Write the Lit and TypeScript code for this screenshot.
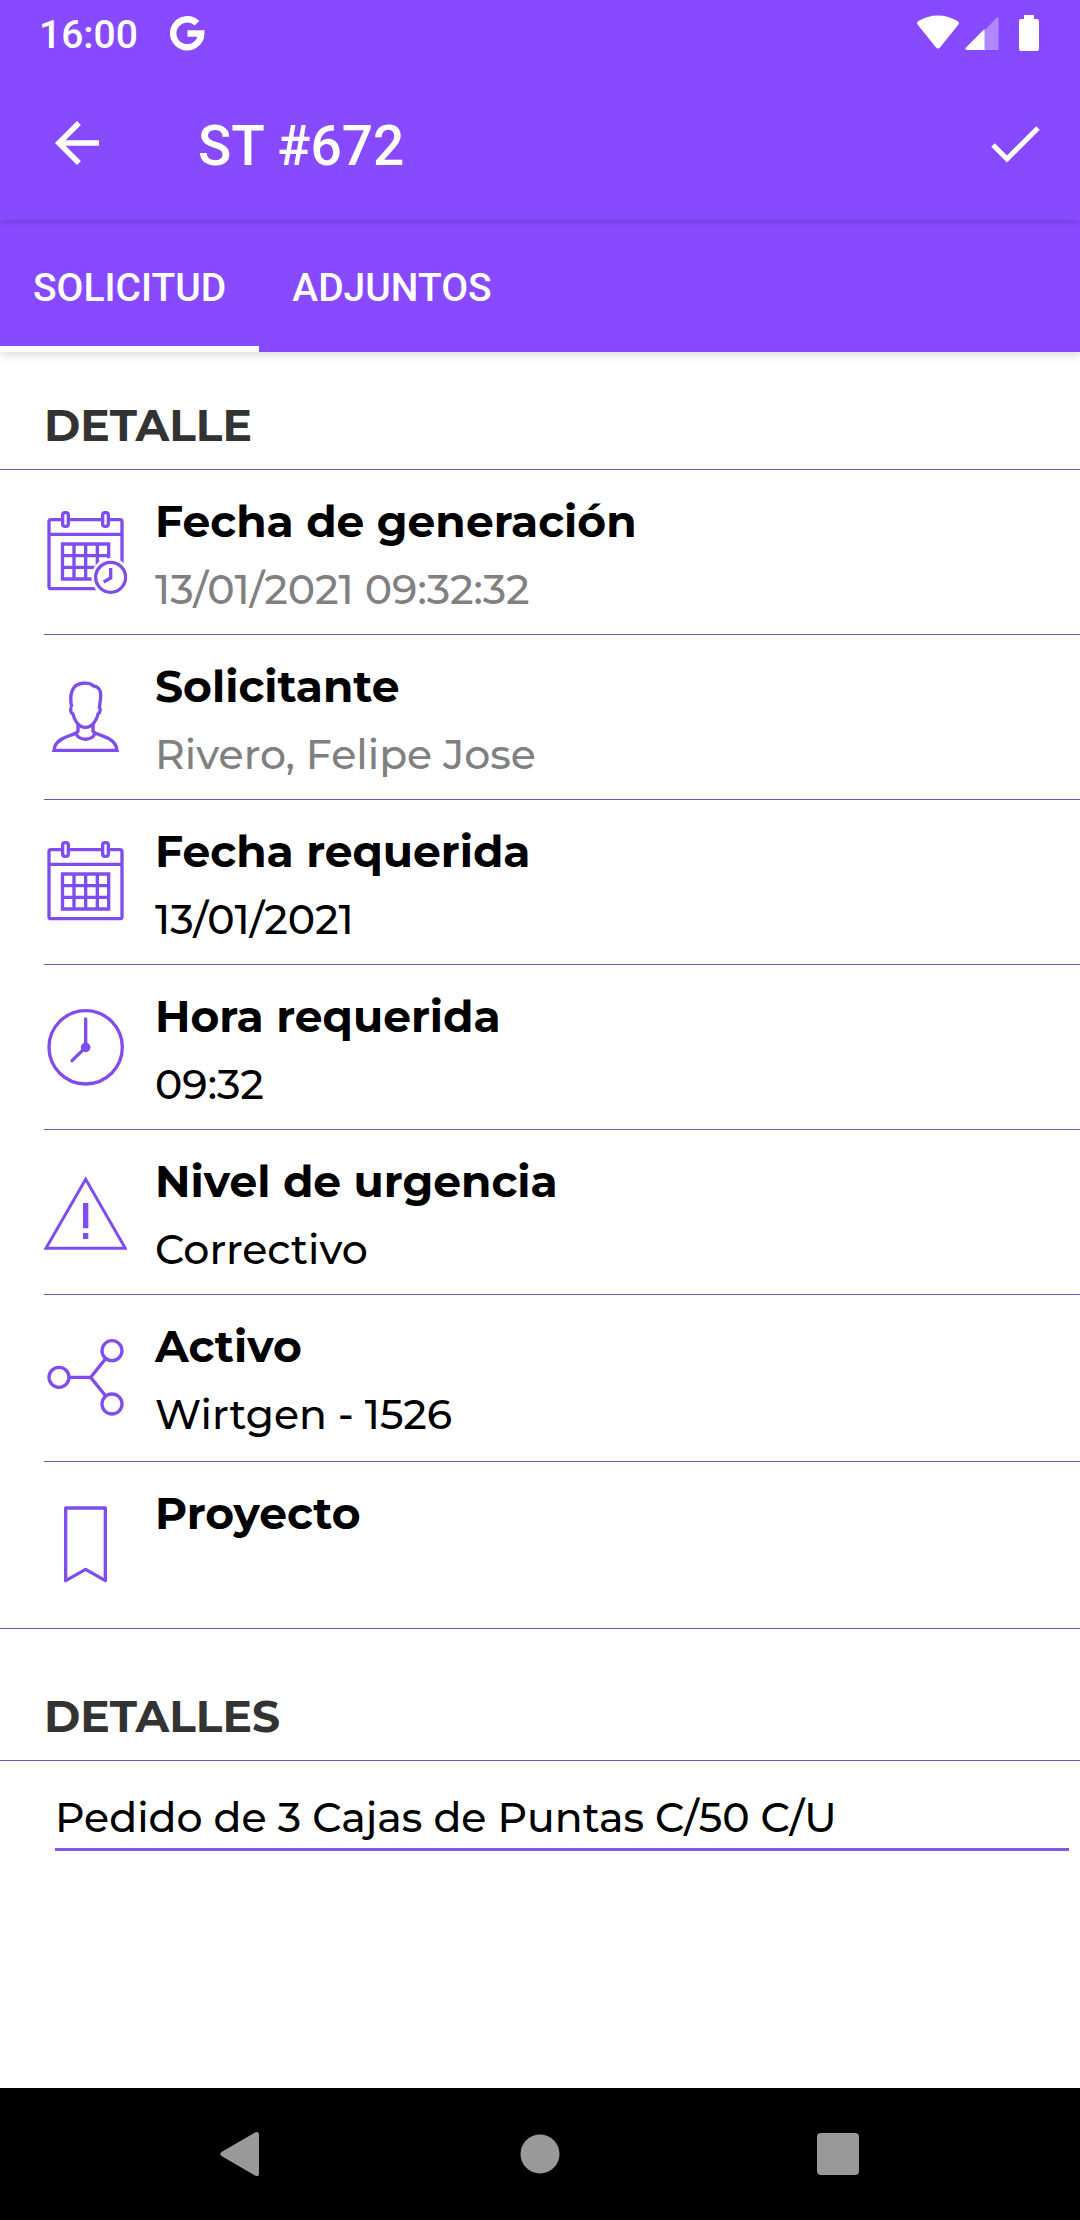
import { LitElement, html, css, svg, TemplateResult } from "lit";
import { customElement, property, state } from "lit/decorators.js";
import { classMap } from "lit/directives/class-map.js";

interface Field {
  icon: string;
  label: string;
  value: string;
  muted?: boolean;
  tall?: boolean;
}

const calendarBody = svg`
  <rect x="57" y="89" width="219" height="207" rx="6"></rect>
  <path d="M57 133H276"></path>
  <rect x="98" y="68" width="17" height="41" rx="7" fill="#fff"></rect>
  <rect x="218" y="68" width="17" height="41" rx="7" fill="#fff"></rect>
  <path d="M97.500 162H236V267H97.500ZM132 162V267M167 162V267M202 162V267M97 197H236M97 232H236"></path>`;

const ICONS: Record<string, { box: string; art: TemplateResult }> = {
  calendarClock: {
    box: "42 63 249 249",
    art: svg`${calendarBody}
      <circle cx="242" cy="262" r="58" fill="#fff" stroke="none"></circle>
      <circle cx="242" cy="262" r="45"></circle>
      <path d="M242 234V264L221 276"></path>`,
  },
  person: {
    box: "42 48 249 249",
    art: svg`
      <path d="M125 142C120 118 121 98 131 84C142 67 176 65 191 78C206 80 213 92 212 106C212 120 210 130 208 142C213 146 211 158 204 162C201 178 188 202 166 202C145 202 132 178 129 162C121 158 120 146 125 142"></path>
      <path d="M144 192V214C132 228 88 228 75 258L72 271H261L258 258C245 228 202 228 189 214V192"></path>
      <path d="M138 219C144 244 189 244 195 219"></path>`,
  },
  calendar: { box: "42 63 249 249", art: calendarBody },
  clock: {
    box: "42 48 249 249",
    art: svg`
      <circle cx="167" cy="172" r="110"></circle>
      <path d="M167 87V172L126 212" stroke-linecap="round"></path>
      <circle cx="167" cy="172" r="14.500" fill="currentColor" stroke="none"></circle>`,
  },
  warning: {
    box: "42 33 249 249",
    art: svg`
      <path d="M167 58L286 265H48Z" stroke-width="9"></path>
      <path d="M167 129V205M167 219V237" stroke-width="16"></path>`,
  },
  share: {
    box: "42 51 249 249",
    art: svg`
      <circle cx="87" cy="172" r="30"></circle>
      <circle cx="246" cy="92" r="30"></circle>
      <circle cx="246" cy="252" r="30"></circle>
      <path d="M117 172H182L227 116M182 172L227 228"></path>`,
  },
  bookmark: {
    box: "42 42 249 249",
    art: svg`<path d="M107 54H226V272L167 238L107 272Z" stroke-linejoin="round"></path>`,
  },
};

@customElement("field-row")
class FieldRow extends LitElement {
  @property({ attribute: false }) field!: Field;

  static styles = css`
    :host {
      display: block;
    }
    .row {
      display: flex;
      align-items: center;
      gap: 28px;
      height: 164px;
      margin-left: 44px;
    }
    .tall {
      height: 166px;
    }
    .icon {
      flex: none;
      width: 83px;
      height: 83px;
      color: #7f4dee;
      fill: none;
      stroke: currentColor;
      stroke-width: 10;
    }
    .texts {
      align-self: stretch;
      padding-top: 19px;
      min-width: 0;
    }
    .label {
      margin: 0;
      font-size: 44px;
      line-height: 64px;
      font-weight: 700;
      color: #000;
    }
    .value {
      margin: 0;
      font-size: 41px;
      line-height: 72px;
      font-weight: 500;
      color: #000;
    }
    .muted {
      color: #808080;
    }
  `;

  render() {
    const { icon, label, value, muted, tall } = this.field;
    const drawing = ICONS[icon];
    return html`
      <div class=${classMap({ row: true, tall: !!tall })}>
        <svg class="icon" viewBox=${drawing.box} aria-hidden="true">${drawing.art}</svg>
        <div class="texts">
          <h3 class="label">${label}</h3>
          <p class=${classMap({ value: true, muted: !!muted })}>${value}</p>
        </div>
      </div>
    `;
  }
}

@customElement("app-root")
class AppRoot extends LitElement {
  @state() private tab = 0;

  private tabs = ["SOLICITUD", "ADJUNTOS"];

  private fields: Field[] = [
    { icon: "calendarClock", label: "Fecha de generación", value: "13/01/2021 09:32:32", muted: true },
    { icon: "person", label: "Solicitante", value: "Rivero, Felipe Jose", muted: true },
    { icon: "calendar", label: "Fecha requerida", value: "13/01/2021" },
    { icon: "clock", label: "Hora requerida", value: "09:32" },
    { icon: "warning", label: "Nivel de urgencia", value: "Correctivo" },
    { icon: "share", label: "Activo", value: "Wirtgen - 1526", tall: true },
    { icon: "bookmark", label: "Proyecto", value: "", tall: true },
  ];

  static styles = css`
    :host {
      display: block;
      font-family: Montserrat, Inter, sans-serif;
    }
    * {
      box-sizing: border-box;
    }
    button {
      border: 0;
      padding: 0;
      background: none;
      color: inherit;
      font: inherit;
      cursor: pointer;
    }
    svg {
      display: block;
    }
    .screen {
      display: flex;
      flex-direction: column;
      min-height: 100vh;
      background: #fff;
    }
    .top {
      position: relative;
      background: #874aff;
      color: #fff;
      font-family: Roboto, sans-serif;
      font-weight: 500;
      box-shadow: 0 2px 10px rgba(0, 0, 0, 0.18);
    }
    .status {
      display: flex;
      align-items: center;
      height: 66px;
      padding: 0 41px 0 39px;
      font-size: 39px;
      line-height: 46px;
    }
    .time {
      padding-top: 4px;
    }
    .google {
      margin-left: 32px;
    }
    .signals {
      display: flex;
      align-items: center;
      margin-left: auto;
    }
    .cell {
      margin: 0 20px 0 6px;
    }
    .bar {
      display: flex;
      align-items: center;
      height: 154px;
      padding: 0 40px 0 44px;
      box-shadow: 0 4px 6px -2px rgba(0, 0, 0, 0.16);
    }
    .title {
      flex: 1;
      margin: 0 0 0 88px;
      padding-top: 6px;
      font-size: 55px;
      line-height: 64px;
      font-weight: 500;
    }
    .tabs {
      display: flex;
      height: 132px;
    }
    .tab {
      padding: 10px 33px 0;
      border-bottom: 6px solid transparent;
      font-size: 39px;
      line-height: 46px;
    }
    .selected {
      border-bottom-color: #fff;
    }
    .content {
      flex: 1;
    }
    .heading {
      margin: 0;
      padding: 41px 44px 12px;
      border-bottom: 1px solid #7852c0;
      font-size: 44px;
      line-height: 64px;
      font-weight: 700;
      color: #333;
    }
    .second {
      padding-top: 55px;
    }
    .list {
      margin: 0;
      padding: 0;
      list-style: none;
      border-bottom: 1px solid #7852c0;
    }
    .divider {
      height: 1px;
      margin-left: 44px;
      background: #7852c0;
    }
    .entry {
      padding: 20px 11px 0 55px;
    }
    .input {
      display: block;
      width: 100%;
      height: 70px;
      margin: 0;
      padding: 5px 0 0;
      border: 0;
      border-bottom: 3px solid #8656ea;
      border-radius: 0;
      outline: 0;
      background: none;
      font-family: inherit;
      font-size: 41px;
      font-weight: 500;
      color: #000;
    }
    .nav {
      display: flex;
      justify-content: center;
      align-items: center;
      gap: 166px;
      height: 132px;
      background: #000;
      color: #999;
    }
    .nav-button {
      display: grid;
      place-items: center;
      width: 132px;
      height: 132px;
    }
  `;

  render() {
    return html`
      <div class="screen">
        <header class="top">
          <div class="status">
            <span class="time">16:00</span>
            <svg class="google" width="35" height="35" viewBox="0 0 35 35" fill="none" stroke="#fff" stroke-width="6.500" aria-hidden="true">
              <path d="M27 7.300A14 14 0 1 0 31.200 17.500H17.500"></path>
            </svg>
            <div class="signals">
              <svg width="42" height="36" viewBox="0 0 42 36" fill="#fff" aria-hidden="true">
                <path d="M1 10Q-1 8 1.500 6C13-1.500 29-1.500 40.500 6Q43 8 41 10L23 32.500Q21 34.500 19 32.500Z"></path>
              </svg>
              <svg class="cell" width="34" height="36" viewBox="0 0 34 36" fill="#fff" aria-hidden="true">
                <path d="M19 16L31.500 3Q33.500 1 33.500 3V35H19Z" opacity="0.350"></path>
                <path d="M19.500 14V35H2Q-0.500 34.500 1 32.500Z"></path>
              </svg>
              <svg width="20" height="36" viewBox="0 0 20 36" fill="#fff" aria-hidden="true">
                <path d="M5 0H15V4H18Q20 4 20 6V34Q20 36 18 36H2Q0 36 0 34V6Q0 4 2 4H5Z"></path>
              </svg>
            </div>
          </div>
          <div class="bar">
            <button aria-label="Volver">
              <svg width="66" height="66" viewBox="0 0 24 24" fill="currentColor">
                <path d="M20 11H7.830l5.590-5.590L12 4l-8 8 8 8 1.410-1.410L7.830 13H20v-2z"></path>
              </svg>
            </button>
            <h1 class="title">ST #672</h1>
            <button aria-label="Guardar">
              <svg width="50" height="50" viewBox="0 0 50 50" fill="none" stroke="currentColor" stroke-width="5">
                <path d="M3 27L17 41L48 10"></path>
              </svg>
            </button>
          </div>
          <div class="tabs" role="tablist">
            ${this.tabs.map(
              (name, index) => html`<button
                role="tab"
                aria-selected=${index === this.tab}
                class=${classMap({ tab: true, selected: index === this.tab })}
                @click=${() => (this.tab = index)}
              >${name}</button>`
            )}
          </div>
        </header>
        <main class="content">
          <h2 class="heading">DETALLE</h2>
          <ul class="list">
            ${this.fields.map(
              (field, index) => html`<li>
                ${index ? html`<div class="divider"></div>` : ""}
                <field-row .field=${field}></field-row>
              </li>`
            )}
          </ul>
          <h2 class="heading second" id="details">DETALLES</h2>
          <div class="entry">
            <input class="input" type="text" aria-labelledby="details" value="Pedido de 3 Cajas de Puntas C/50 C/U" />
          </div>
        </main>
        <nav class="nav">
          <button class="nav-button" aria-label="Atrás">
            <svg width="44" height="46" viewBox="0 0 44 46" fill="currentColor">
              <path d="M1.500 21L35 1.500Q39 -0.500 39 4V42Q39 46.500 35 44.500L1.500 25Q-1 23 1.500 21Z"></path>
            </svg>
          </button>
          <button class="nav-button" aria-label="Inicio">
            <svg width="40" height="40" viewBox="0 0 40 40" fill="currentColor"><circle cx="20" cy="20" r="19.500"></circle></svg>
          </button>
          <button class="nav-button" aria-label="Recientes">
            <svg width="42" height="42" viewBox="0 0 42 42" fill="currentColor"><rect width="42" height="42" rx="4"></rect></svg>
          </button>
        </nav>
      </div>
    `;
  }
}
